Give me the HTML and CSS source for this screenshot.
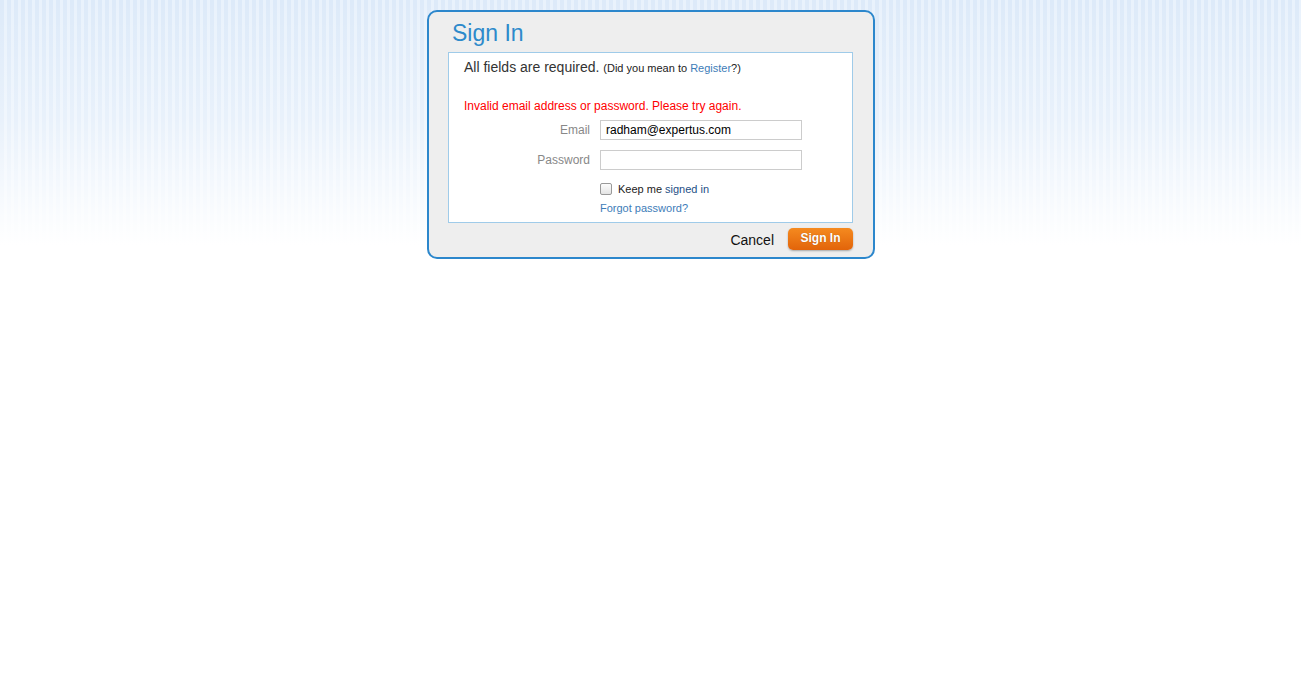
FILE: index.html
```html
<!DOCTYPE html>
<html>
<head>
<meta charset="utf-8">
<link rel="stylesheet" href="styles.css">
</head>
<body>
<div class="bg">
  <div class="dialog">
    <h1 class="title">Sign In</h1>
    <div class="panel">
      <p class="req">All fields are required. <span class="small">(Did you mean to <a href="#" class="link">Register</a>?)</span></p>
      <p class="error">Invalid email address or password. Please try again.</p>
      <div class="row first-row">
        <label class="lbl">Email</label>
        <input class="field" type="text" value="radham@expertus.com">
      </div>
      <div class="row">
        <label class="lbl">Password</label>
        <input class="field" type="password">
      </div>
      <div class="row check-row">
        <span class="lbl"></span>
        <label class="keep"><span class="box"></span>Keep me <span class="signed">signed in</span></label>
      </div>
      <div class="row forgot-row">
        <span class="lbl"></span>
        <a href="#" class="forgot">Forgot password?</a>
      </div>
    </div>
    <div class="actions">
      <span class="cancel">Cancel</span>
      <button class="btn">Sign In</button>
    </div>
  </div>
</div>
</body>
</html>
```
FILE: styles.css
```css
html, body {
  margin: 0;
  padding: 0;
  background: #fff;
  font-family: "Liberation Sans", Arial, sans-serif;
}
.bg {
  height: 678px;
  background:
    linear-gradient(to bottom, rgba(255,255,255,0) 0px, rgba(255,255,255,0.35) 120px, rgba(255,255,255,1) 245px),
    repeating-linear-gradient(to right, #ddeaf9 0px, #ddeaf9 4px, #e9f2fc 4px, #e9f2fc 7px),
    #fff;
  background-size: 100% 100%, 100% 246px, auto;
  background-repeat: no-repeat;
  padding-top: 10px;
  box-sizing: border-box;
}
.dialog {
  width: 448px;
  margin-left: 427px;
  height: 249px;
  border: 2px solid #2c87cc;
  border-radius: 10px;
  background: #eeeeee;
  box-sizing: border-box;
  padding: 0 20px 0 19px;
}
.title {
  margin: 0;
  font-weight: normal;
  font-size: 23px;
  color: #2d8acb;
  line-height: 40px;
  padding: 1px 0 0 4px;
  height: 40px;
  box-sizing: border-box;
}
.panel {
  background: #fff;
  border: 1px solid #9fcbe9;
  height: 171px;
  box-sizing: border-box;
  padding: 6px 15px 0 15px;
}
.req {
  margin: 0;
  font-size: 14px;
  color: #333;
  line-height: 17px;
}
.small {
  font-size: 11px;
  color: #222;
}
.link {
  color: #3d7cb8;
  text-decoration: none;
}
.error {
  margin: 22px 0 0 0;
  font-size: 12px;
  color: #ff0000;
  line-height: 14px;
}
.row {
  display: flex;
  align-items: center;
  margin-top: 10px;
}
.first-row { margin-top: 7px; }
.lbl {
  width: 126px;
  text-align: right;
  padding-right: 10px;
  font-size: 12px;
  color: #888;
  flex: none;
}
.field {
  width: 202px;
  height: 20px;
  box-sizing: border-box;
  border: 1px solid #ccc;
  margin: 0;
  padding: 0 5px;
  font-family: "Liberation Sans", Arial, sans-serif;
  font-size: 12px;
  color: #000;
  outline: none;
}
.check-row { margin-top: 13px; }
.keep {
  display: flex;
  align-items: center;
  font-size: 11px;
  color: #222;
}
.box {
  width: 10px;
  height: 10px;
  border: 1px solid #999;
  border-radius: 2px;
  background: linear-gradient(#fcfcfc, #e4e4e4);
  margin-right: 6px;
}
.signed { color: #1e4f86; margin-left: 3px; }
.forgot-row { margin-top: 7px; }
.forgot {
  font-size: 11px;
  color: #3d7cb8;
  text-decoration: none;
}
.actions {
  display: flex;
  justify-content: flex-end;
  align-items: center;
  margin-top: 5px;
}
.cancel {
  font-size: 14px;
  color: #111;
  margin-right: 14px;
  margin-top: 2px;
}
.btn {
  width: 65px;
  height: 22px;
  border: none;
  border-radius: 5px;
  background: linear-gradient(#f58a1f, #e2640a);
  color: #fff;
  font-weight: bold;
  font-size: 12px;
  font-family: "Liberation Sans", Arial, sans-serif;
  box-shadow: 0 1px 2px rgba(0,0,0,0.3);
  padding: 0 0 2px 0;
  text-shadow: 0 0 1px rgba(0,0,0,0.3);
}
```
